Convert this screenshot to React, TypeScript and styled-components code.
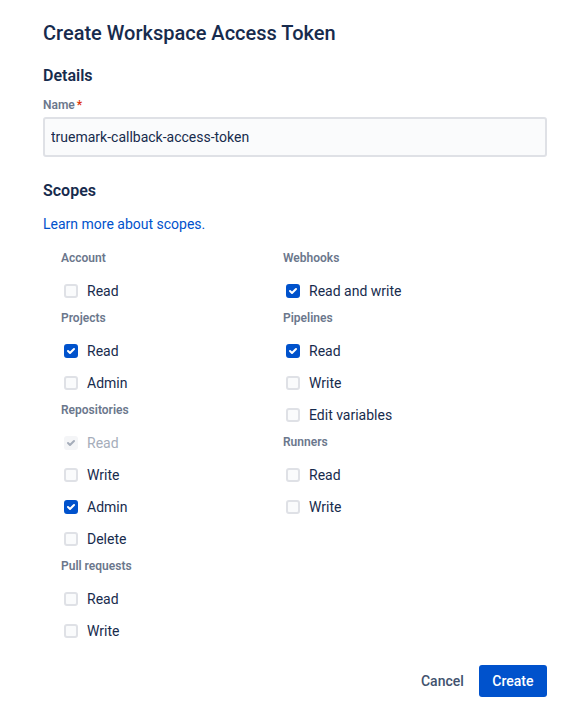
import React from "react";
import styled, { createGlobalStyle } from "styled-components";

const Global = createGlobalStyle`
  html, body { margin: 0; padding: 0; background: #fff; }
  body { font-family: Roboto, "Noto Sans", sans-serif; color: #172B4D; -webkit-font-smoothing: antialiased; }
  * { box-sizing: border-box; }
`;

const Page = styled.div`
  width: 581px;
  height: 712px;
  padding: 21px 34px 0 43px;
  display: flex;
  flex-direction: column;
`;

const Title = styled.h1`
  margin: 0;
  font-size: 20px;
  line-height: 24px;
  font-weight: 500;
  color: #172B4D;
`;

const SectionTitle = styled.h2<{ $mt: number }>`
  margin: ${(p) => p.$mt}px 0 0;
  font-size: 16px;
  line-height: 20px;
  font-weight: 600;
  color: #172B4D;
`;

const FieldLabel = styled.label`
  margin-top: 11px;
  font-size: 12px;
  line-height: 16px;
  font-weight: 600;
  color: #6B778C;
`;

const Required = styled.span`
  color: #DE350B;
  margin-left: 2px;
`;

const Input = styled.input`
  margin-top: 4px;
  width: 504px;
  height: 40px;
  border: 2px solid #DFE1E6;
  border-radius: 3px;
  background: #FAFBFC;
  padding: 0 6px;
  font-family: inherit;
  font-size: 14px;
  color: #172B4D;
  outline: none;
`;

const Link = styled.a`
  margin-top: 13px;
  font-size: 14px;
  line-height: 20px;
  color: #0052CC;
  text-decoration: none;
  align-self: flex-start;
`;

const Columns = styled.div`
  margin-top: 16px;
  padding-left: 18px;
  display: grid;
  grid-template-columns: 222px 222px;
`;

const Column = styled.div`
  display: flex;
  flex-direction: column;
  gap: 7px;
`;

const Group = styled.div`
  display: flex;
  flex-direction: column;
`;

const GroupTitle = styled.div`
  font-size: 12px;
  line-height: 16px;
  font-weight: 600;
  color: #6B778C;
  margin-bottom: 13px;
`;

const Rows = styled.div`
  display: flex;
  flex-direction: column;
  gap: 8px;
`;

const Row = styled.label<{ $disabled?: boolean }>`
  height: 24px;
  display: flex;
  align-items: center;
  font-size: 14px;
  color: ${(p) => (p.$disabled ? "#A5ADBA" : "#172B4D")};
`;

const Box = styled.span`
  width: 14px;
  height: 14px;
  margin-left: 3px;
  margin-right: 9px;
  display: inline-flex;
`;

const Footer = styled.div`
  margin-top: 22px;
  display: flex;
  justify-content: flex-end;
  gap: 3px;
`;

const Button = styled.button<{ $primary?: boolean }>`
  height: 32px;
  padding: 0 ${(p) => (p.$primary ? 13.5 : 12)}px;
  border: none;
  border-radius: 3px;
  font-family: inherit;
  font-size: 14px;
  font-weight: 500;
  background: ${(p) => (p.$primary ? "#0052CC" : "transparent")};
  color: ${(p) => (p.$primary ? "#fff" : "#42526E")};
  cursor: pointer;
`;

type State = "off" | "on" | "disabled";

const CheckIcon = ({ state }: { state: State }) => {
  const fill = state === "on" ? "#0052CC" : state === "disabled" ? "#F4F5F7" : "#FAFBFC";
  const stroke = state === "on" ? "#0052CC" : state === "disabled" ? "#F4F5F7" : "#DFE1E6";
  return (
    <svg width="14" height="14" viewBox="5 5 14 14">
      <rect x="6" y="6" width="12" height="12" rx="2" fill={fill} stroke={stroke} strokeWidth="2" />
      {state !== "off" && (
        <path
          d="M9.707 11.293a1 1 0 1 0-1.414 1.414l2 2a1 1 0 0 0 1.414 0l4-4a1 1 0 1 0-1.414-1.414L11 12.586l-1.293-1.293z"
          fill={state === "on" ? "#fff" : "#A5ADBA"}
        />
      )}
    </svg>
  );
};

type Item = { label: string; state: State };
type G = { title: string; items: Item[] };

const left: G[] = [
  { title: "Account", items: [{ label: "Read", state: "off" }] },
  { title: "Projects", items: [{ label: "Read", state: "on" }, { label: "Admin", state: "off" }] },
  {
    title: "Repositories",
    items: [
      { label: "Read", state: "disabled" },
      { label: "Write", state: "off" },
      { label: "Admin", state: "on" },
      { label: "Delete", state: "off" },
    ],
  },
  { title: "Pull requests", items: [{ label: "Read", state: "off" }, { label: "Write", state: "off" }] },
];

const right: G[] = [
  { title: "Webhooks", items: [{ label: "Read and write", state: "on" }] },
  {
    title: "Pipelines",
    items: [
      { label: "Read", state: "on" },
      { label: "Write", state: "off" },
      { label: "Edit variables", state: "off" },
    ],
  },
  { title: "Runners", items: [{ label: "Read", state: "off" }, { label: "Write", state: "off" }] },
];

const renderColumn = (groups: G[]) => (
  <Column>
    {groups.map((g) => (
      <Group key={g.title}>
        <GroupTitle>{g.title}</GroupTitle>
        <Rows>
          {g.items.map((it) => (
            <Row key={it.label} $disabled={it.state === "disabled"}>
              <Box>
                <CheckIcon state={it.state} />
              </Box>
              {it.label}
            </Row>
          ))}
        </Rows>
      </Group>
    ))}
  </Column>
);

export default function App() {
  return (
    <>
      <Global />
      <Page>
        <Title>Create Workspace Access Token</Title>
        <SectionTitle $mt={21}>Details</SectionTitle>
        <FieldLabel>
          Name<Required>*</Required>
        </FieldLabel>
        <Input defaultValue="truemark-callback-access-token" />
        <SectionTitle $mt={24}>Scopes</SectionTitle>
        <Link href="#">Learn more about scopes.</Link>
        <Columns>
          {renderColumn(left)}
          {renderColumn(right)}
        </Columns>
        <Footer>
          <Button>Cancel</Button>
          <Button $primary>Create</Button>
        </Footer>
      </Page>
    </>
  );
}
